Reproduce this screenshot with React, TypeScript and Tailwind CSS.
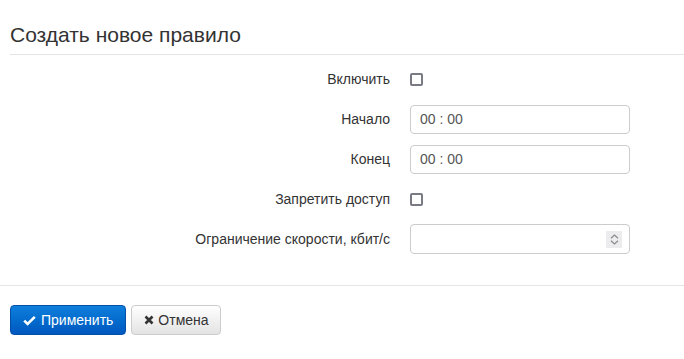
import React from 'react';

const font = { fontFamily: '"Liberation Sans", Arial, sans-serif' };

const Checkbox = () => (
  <div className="w-[13px] h-[13px] border-2 border-[#7a7a85] rounded-[2px] bg-white" />
);

const TimeInput = ({ value }: { value: string }) => (
  <div className="w-[220px] h-[29px] border border-[#cccccc] rounded-[4px] bg-white flex items-center px-[9px] text-[14px] text-[#555]">
    {value}
  </div>
);

const NumberInput = () => (
  <div className="w-[220px] h-[30px] border border-[#cccccc] rounded-[4px] bg-white flex items-center justify-end pr-[7px]">
    <div className="w-[16px] h-[17px] bg-[#ececef] flex flex-col items-center justify-center gap-[1px]">
      <svg width="9" height="5" viewBox="0 0 9 5">
        <path d="M1 4.2 L4.5 1 L8 4.2" fill="none" stroke="#8a8a90" strokeWidth="1.2" />
      </svg>
      <svg width="9" height="5" viewBox="0 0 9 5">
        <path d="M1 0.8 L4.5 4 L8 0.8" fill="none" stroke="#8a8a90" strokeWidth="1.2" />
      </svg>
    </div>
  </div>
);

const rows: { label: string; control: React.ReactNode }[] = [
  { label: 'Включить', control: <Checkbox /> },
  { label: 'Начало', control: <TimeInput value="00 : 00" /> },
  { label: 'Конец', control: <TimeInput value="00 : 00" /> },
  { label: 'Запретить доступ', control: <Checkbox /> },
  { label: 'Ограничение скорости, кбит/с', control: <NumberInput /> },
];

export default function App() {
  return (
    <div className="w-[684px] h-[359px] bg-white text-[#333]" style={font}>
      <div className="pl-[10px] pt-[20px]">
        <h1 className="text-[21px] leading-[30px] font-normal text-[#333]">Создать новое правило</h1>
        <div className="mt-[4px] border-b border-[#e5e5e5]" />
      </div>
      <div className="pt-[4px] pb-[26px] flex flex-col">
        {rows.map((r) => (
          <div key={r.label} className="flex items-center h-[40px]">
            <div className="w-[390px] text-right text-[14px] text-[#333]">{r.label}</div>
            <div className="ml-[20px] flex items-center">{r.control}</div>
          </div>
        ))}
      </div>
      <div className="border-b border-[#e5e5e5]" />
      <div className="pl-[10px] pt-[19px] flex gap-[5px]">
        <button className="h-[30px] px-[12px] flex items-center gap-[5px] rounded-[4px] border border-[#0450a8] bg-gradient-to-b from-[#0f7fdc] to-[#0058bf] text-white text-[14px]">
          <svg width="13" height="11" viewBox="0 0 13 11">
            <path d="M1.2 5.6 L4.6 9 L11.8 1.8" fill="none" stroke="#fff" strokeWidth="2.6" />
          </svg>
          Применить
        </button>
        <button className="h-[30px] pl-[12px] pr-[11px] flex items-center gap-[4px] rounded-[4px] border border-[#cccccc] bg-gradient-to-b from-[#ffffff] to-[#e3e3e3] text-[#333] text-[14px]">
          <svg width="10" height="10" viewBox="0 0 10 10">
            <path d="M1.5 1.5 L8.5 8.5 M8.5 1.5 L1.5 8.5" fill="none" stroke="#333" strokeWidth="2.6" />
          </svg>
          Отмена
        </button>
      </div>
    </div>
  );
}
